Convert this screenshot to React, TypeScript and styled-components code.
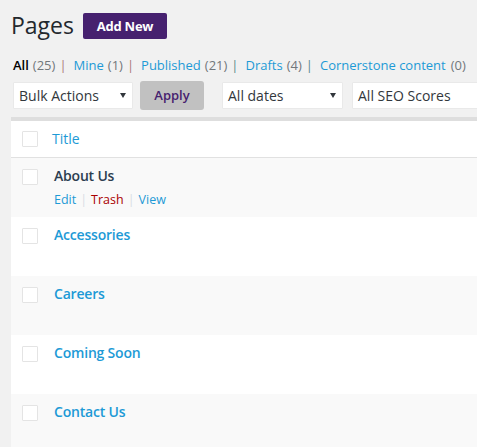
import React from "react";
import styled, { createGlobalStyle } from "styled-components";

const Global = createGlobalStyle`
  html, body { margin: 0; padding: 0; background: #f1f1f1; overflow: hidden; }
  body { font-family: "Open Sans", sans-serif; font-size: 13px; color: #444; width: 477px; height: 447px; }
`;

const Page = styled.div`
  width: 477px; height: 447px; overflow: hidden; box-sizing: border-box; padding-left: 11px;
`;
const Header = styled.div`
  display: flex; align-items: flex-start; height: 56px; padding-top: 9px; box-sizing: border-box; gap: 9px;
`;
const Heading = styled.h1`
  margin: 0; font-size: 23px; font-weight: 400; line-height: 33px; color: #23282d;
`;
const AddNew = styled.a`
  margin-top: 4px; width: 84px; height: 26px; border-radius: 2px; background: #46216f; color: #fff;
  font-size: 13px; font-weight: 700; line-height: 26px; text-align: center; letter-spacing: -0.25px;
`;
const Filters = styled.ul`
  list-style: none; margin: 0 0 0 2px; padding: 0; display: flex; height: 19px; line-height: 19px; font-size: 13px;
  white-space: nowrap; color: #72777c;
`;
const FilterItem = styled.li<{ $gap?: number }>`
  display: flex; gap: ${(p) => p.$gap ?? 4}px;
`;
const FilterSep = styled.span<{ $tone?: string }>`
  margin-right: 7px; color: ${(p) => p.$tone ?? "#a77"};
`;
const FilterLink = styled.a<{ $current?: boolean }>`
  color: ${(p) => (p.$current ? "#000" : "#1d9ad6")};
  font-weight: ${(p) => (p.$current ? 600 : 400)};
`;
const Toolbar = styled.div`
  display: flex; align-items: center; height: 29px; margin-top: 6px; padding-left: 2px; white-space: nowrap;
`;
const Select = styled.div<{ $w: number; $gap: number }>`
  position: relative; flex: none; width: ${(p) => p.$w}px; height: 27px; margin-right: ${(p) => p.$gap}px;
  box-sizing: border-box; background: #fff; border: 1px solid #e9e9e9; border-radius: 1px; padding-left: 5px;
  font-size: 14px; line-height: 25px; color: #32373c;
`;
const Arrow = styled.svg`
  position: absolute; right: 6px; top: 10px; width: 6px; height: 5px;
`;
const Apply = styled.button`
  flex: none; width: 64px; height: 29px; margin-right: 18px; padding: 0; border: 0; border-radius: 3px; background: #c1c1c1;
  color: #46216f; font: 600 13px/29px "Open Sans", sans-serif;
`;
const Table = styled.div`
  margin-top: 7px; border-top: 4px solid #dedede; background: #fff; height: 330px;
`;
const HeadRow = styled.div`
  display: flex; height: 36px; border-bottom: 1px solid #e1e1e1; padding-left: 11px; align-items: center;
`;
const Check = styled.span`
  flex: none; width: 14px; height: 14px; background: #fff;
  border: 1px solid #e4e4e4; border-radius: 1px;
`;
const TitleHead = styled.a`
  margin-left: 14px; margin-top: -1px; color: #1d9ad6; font-size: 14px;
`;
const Row = styled.div<{ $alt: boolean }>`
  display: flex; height: 59px; box-sizing: border-box; padding: 11px 0 0 11px; background: ${(p) => (p.$alt ? "#f9f9f9" : "#fff")};
`;
const RowBody = styled.div`
  margin-left: 16px; margin-top: -3px;
`;
const RowTitle = styled.a<{ $dark?: boolean }>`
  display: block; font-size: 14px; font-weight: 600; line-height: 20px; letter-spacing: -0.2px;
  color: ${(p) => (p.$dark ? "#2c3e50" : "#1d9ad6")};
`;
const Actions = styled.div`
  display: flex; font-size: 12.5px; line-height: 18px; margin-top: 5px;
`;
const Action = styled.a<{ $danger?: boolean }>`
  color: ${(p) => (p.$danger ? "#a00" : "#1d9ad6")};
`;
const ActionSep = styled.span`
  color: #d8dde4; margin: 0 4px;
`;

const rows = ["About Us", "Accessories", "Careers", "Coming Soon", "Contact Us"];

const DownArrow = () => (
  <Arrow viewBox="0 0 6 5"><path d="M0 0h6L3 5z" fill="#32373c" /></Arrow>
);

export default function App() {
  return (
    <Page>
      <Global />
      <Header>
        <Heading>Pages</Heading>
        <AddNew>Add New</AddNew>
      </Header>
      <Filters>
        <FilterItem><FilterLink $current>All</FilterLink>(25)<FilterSep>|</FilterSep></FilterItem>
        <FilterItem><FilterLink>Mine</FilterLink>(1)<FilterSep>|</FilterSep></FilterItem>
        <FilterItem><FilterLink>Published</FilterLink>(21)<FilterSep $tone="#5a8a8a">|</FilterSep></FilterItem>
        <FilterItem><FilterLink>Drafts</FilterLink>(4)<FilterSep $tone="#5a8a8a">|</FilterSep></FilterItem>
        <FilterItem $gap={5}><FilterLink>Cornerstone content</FilterLink>(0)</FilterItem>
      </Filters>
      <Toolbar>
        <Select $w={120} $gap={7}>Bulk Actions<DownArrow /></Select>
        <Apply>Apply</Apply>
        <Select $w={121} $gap={9}>All dates<DownArrow /></Select>
        <Select $w={160} $gap={0}>All SEO Scores</Select>
      </Toolbar>
      <Table>
        <HeadRow>
          <Check />
          <TitleHead>Title</TitleHead>
        </HeadRow>
        {rows.map((title, i) => (
          <Row key={title} $alt={i % 2 === 0}>
            <Check />
            <RowBody>
              <RowTitle $dark={i === 0}>{title}</RowTitle>
              {i === 0 && (
                <Actions>
                  <Action>Edit</Action><ActionSep>|</ActionSep>
                  <Action $danger>Trash</Action><ActionSep>|</ActionSep>
                  <Action>View</Action>
                </Actions>
              )}
            </RowBody>
          </Row>
        ))}
      </Table>
    </Page>
  );
}
